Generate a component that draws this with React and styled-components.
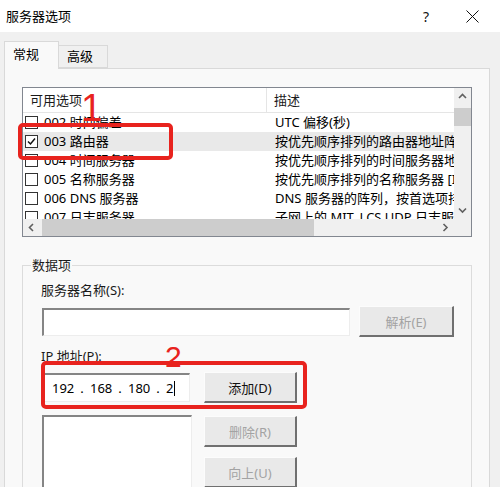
import styled, { createGlobalStyle } from 'styled-components';

const GlobalStyle = createGlobalStyle`
  html, body {
    margin: 0;
    padding: 0;
  }

  body {
    font-family: "Noto Sans", "Noto Sans CJK SC", sans-serif;
    font-size: 13px;
    color: #000;
  }
`;

const RED = '#e8231e';

const StyledWindow = styled.div`
  position: relative;
  width: 500px;
  height: 487px;
  overflow: hidden;
  display: flex;
  flex-direction: column;
  background-color: #f0f0f0;
`;

const StyledTitleBar = styled.header`
  flex: none;
  height: 32px;
  display: flex;
  align-items: center;
  padding: 0 5px 0 6px;
  background-color: #fff;
`;

const StyledTitle = styled.h1`
  flex: 1;
  margin: 0;
  font-size: 13px;
  font-weight: 400;
  line-height: 18px;
`;

const StyledTitleButton = styled.button`
  width: 46px;
  height: 32px;
  display: grid;
  place-items: center;
  padding: 0;
  border: none;
  background: none;
  font-family: inherit;
  font-size: 14px;
  color: #111;
`;

const StyledBody = styled.div`
  flex: 1;
  display: flex;
  flex-direction: column;
  padding: 9px 10px 0 4px;
  min-height: 0;
`;

const StyledTabStrip = styled.div`
  display: flex;
  align-items: flex-end;
  height: 27px;
`;

const StyledTab = styled.div`
  position: relative;
  z-index: ${({ $active }) => ($active ? 1 : 0)};
  box-sizing: border-box;
  width: ${({ $active }) => ($active ? '55px' : '49px')};
  height: ${({ $active }) => ($active ? '28px' : '23px')};
  margin-bottom: ${({ $active }) => ($active ? '-1px' : '0')};
  padding: ${({ $active }) => ($active ? '3px 0 0 8px' : '1px 0 0 8px')};
  border: 1px solid #d9d9d9;
  border-left-width: ${({ $active }) => ($active ? '1px' : '0')};
  border-bottom: ${({ $active }) => ($active ? 'none' : '1px solid #d9d9d9')};
  background-color: ${({ $active }) => ($active ? '#f9f9f9' : '#f0f0f0')};
  line-height: 18px;
`;

const StyledPanel = styled.section`
  flex: 1;
  min-height: 0;
  padding: 18px 17px 0;
  border: 1px solid #d9d9d9;
  border-bottom: none;
  background-color: #f9f9f9;
`;

const StyledListView = styled.div`
  height: 150px;
  box-sizing: border-box;
  display: grid;
  grid-template-columns: 1fr 17px;
  grid-template-rows: 1fr 17px;
  border: 1px solid #828790;
  background-color: #fff;
`;

const StyledListContent = styled.div`
  overflow: hidden;
  min-width: 0;
`;

const StyledHeaderRow = styled.div`
  display: flex;
  height: 25px;
  box-sizing: border-box;
  border-bottom: 1px solid #e5e5e5;
  line-height: 24px;
`;

const StyledHeaderCell = styled.div`
  box-sizing: border-box;
  flex: ${({ $first }) => ($first ? '0 0 244px' : '1')};
  padding-left: 7px;
  border-right: ${({ $first }) => ($first ? '1px solid #e5e5e5' : 'none')};
  color: #1a1a1a;
`;

const StyledRow = styled.div`
  display: flex;
  height: 19px;
  align-items: center;
  background-color: ${({ $selected }) => ($selected ? '#e9e9e9' : 'transparent')};
  white-space: nowrap;
  line-height: 19px;
`;

const StyledNameCell = styled.div`
  flex: 0 0 244px;
  box-sizing: border-box;
  display: flex;
  align-items: center;
  gap: 6px;
  padding-left: 2px;
  overflow: hidden;
`;

const StyledDescCell = styled.div`
  flex: 1;
  min-width: 0;
  padding-left: 8px;
  overflow: hidden;
`;

const StyledCheckbox = styled.span`
  flex: none;
  width: 13px;
  height: 13px;
  box-sizing: border-box;
  display: grid;
  place-items: center;
  border: 1px solid #333;
  background-color: #fff;
`;

const StyledVScroll = styled.div`
  display: flex;
  flex-direction: column;
  background-color: #f0f0f0;
`;

const StyledHScroll = styled.div`
  display: flex;
  background-color: #f0f0f0;
`;

const StyledArrow = styled.div`
  flex: none;
  width: 17px;
  height: 17px;
  display: grid;
  place-items: center;
`;

const StyledTrack = styled.div`
  flex: 1;
  display: flex;
  flex-direction: ${({ $vertical }) => ($vertical ? 'column' : 'row')};
`;

const StyledThumb = styled.div`
  background-color: #cdcdcd;
  ${({ $vertical }) => ($vertical
    ? 'height: 18px; margin-top: 3px;'
    : 'width: 272px; margin-left: 2px;')}
`;

const StyledCorner = styled.div`
  background-color: #f0f0f0;
`;

const StyledGroup = styled.fieldset`
  margin: 19px 0 0;
  padding: 7px 17px 0 18px;
  height: 260px;
  box-sizing: border-box;
  border: 1px solid #dcdcdc;
  border-bottom: none;
`;

const StyledLegend = styled.legend`
  margin-left: -10px;
  padding: 0 1px;
  line-height: 18px;
  color: #1a1a1a;
`;

const StyledLabel = styled.div`
  margin-top: ${({ $gap }) => $gap || 0}px;
  line-height: 18px;
  color: #1a1a1a;
`;

const StyledFieldRow = styled.div`
  display: flex;
  align-items: ${({ $top }) => ($top ? 'flex-start' : 'center')};
  gap: ${({ $gap }) => $gap}px;
  margin-top: ${({ $mt }) => $mt}px;
`;

const StyledInput = styled.div`
  width: ${({ $w }) => $w}px;
  height: ${({ $h }) => $h}px;
  box-sizing: border-box;
  margin-left: 1px;
  border-style: solid;
  border-width: 2px 1px 1px 2px;
  border-color: #858585 #ededed #ededed #858585;
  background-color: #fff;
`;

const StyledIpField = styled(StyledInput)`
  display: flex;
  align-items: center;
  padding-left: 8px;
  line-height: 18px;
`;

const StyledOctet = styled.span`
  width: 22px;
  white-space: nowrap;
`;

const StyledDot = styled.span`
  width: 16px;
  text-align: center;
`;

const StyledCaret = styled.span`
  display: inline-block;
  width: 1px;
  height: 15px;
  margin-left: 1px;
  vertical-align: -3px;
  background-color: #000;
`;

const StyledButton = styled.button`
  width: ${({ $w }) => $w}px;
  height: 31px;
  box-sizing: border-box;
  padding: 0;
  border-style: solid;
  border-width: 1px 2px 2px 1px;
  border-color: #fcfcfc #707070 #707070 #fcfcfc;
  background-color: #e9e9e9;
  font-family: inherit;
  font-size: 13px;
  color: ${({ disabled }) => (disabled ? '#a3a3a3' : '#111')};
`;

const StyledButtonColumn = styled.div`
  display: flex;
  flex-direction: column;
  gap: 10px;
  padding-top: 1px;
`;

const StyledMarkBox = styled.div`
  position: absolute;
  left: ${({ $x }) => $x}px;
  top: ${({ $y }) => $y}px;
  width: ${({ $w }) => $w}px;
  height: ${({ $h }) => $h}px;
  box-sizing: border-box;
  border: 4px solid ${RED};
  border-radius: 5px;
  pointer-events: none;
`;

const StyledMarkNumber = styled.span`
  position: absolute;
  left: ${({ $x }) => $x}px;
  top: ${({ $y }) => $y}px;
  font-family: "Liberation Sans", sans-serif;
  font-size: ${({ $size }) => $size}px;
  line-height: 1;
  color: ${RED};
`;

const OPTIONS = [
  { name: '002 时间偏差', desc: 'UTC 偏移(秒)' },
  { name: '003 路由器', desc: '按优先顺序排列的路由器地址阵列', checked: true },
  { name: '004 时间服务器', desc: '按优先顺序排列的时间服务器地址阵列' },
  { name: '005 名称服务器', desc: '按优先顺序排列的名称服务器 [IEN 116]' },
  { name: '006 DNS 服务器', desc: 'DNS 服务器的阵列，按首选项排列' },
  { name: '007 日志服务器', desc: '子网上的 MIT_LCS UDP 日志服务器阵列' },
];

function Chevron({ dir }) {
  const points = {
    up: '1,6 4.5,2.5 8,6',
    down: '1,2.5 4.5,6 8,2.5',
    left: '6,1 2.5,4.5 6,8',
    right: '2.5,1 6,4.5 2.5,8',
  }[dir];

  return (
    <svg width="9" height="9" viewBox="0 0 9 9">
      <polyline points={points} fill="none" stroke="#606060" strokeWidth="1.6" />
    </svg>
  );
}

function App() {
  return (
    <StyledWindow>
      <GlobalStyle />

      <StyledTitleBar>
        <StyledTitle>服务器选项</StyledTitle>
        <StyledTitleButton>?</StyledTitleButton>
        <StyledTitleButton aria-label="关闭">
          <svg width="13" height="13" viewBox="0 0 13 13">
            <path d="M0.5 0.5 L12.5 12.5 M12.5 0.5 L0.5 12.5" stroke="#111" strokeWidth="1" />
          </svg>
        </StyledTitleButton>
      </StyledTitleBar>

      <StyledBody>
        <StyledTabStrip>
          <StyledTab $active>常规</StyledTab>
          <StyledTab>高级</StyledTab>
        </StyledTabStrip>

        <StyledPanel>
          <StyledListView>
            <StyledListContent>
              <StyledHeaderRow>
                <StyledHeaderCell $first>可用选项</StyledHeaderCell>
                <StyledHeaderCell>描述</StyledHeaderCell>
              </StyledHeaderRow>
              {OPTIONS.map((option) => (
                <StyledRow key={option.name} $selected={option.checked}>
                  <StyledNameCell>
                    <StyledCheckbox>
                      {option.checked && (
                        <svg width="9" height="9" viewBox="0 0 9 9">
                          <polyline points="1,4.5 3.5,7 8,1.5" fill="none" stroke="#111" strokeWidth="1.5" />
                        </svg>
                      )}
                    </StyledCheckbox>
                    {option.name}
                  </StyledNameCell>
                  <StyledDescCell>{option.desc}</StyledDescCell>
                </StyledRow>
              ))}
            </StyledListContent>

            <StyledVScroll>
              <StyledArrow><Chevron dir="up" /></StyledArrow>
              <StyledTrack $vertical>
                <StyledThumb $vertical />
              </StyledTrack>
              <StyledArrow><Chevron dir="down" /></StyledArrow>
            </StyledVScroll>

            <StyledHScroll>
              <StyledArrow><Chevron dir="left" /></StyledArrow>
              <StyledTrack>
                <StyledThumb />
              </StyledTrack>
              <StyledArrow><Chevron dir="right" /></StyledArrow>
            </StyledHScroll>

            <StyledCorner />
          </StyledListView>

          <StyledGroup>
            <StyledLegend>数据项</StyledLegend>

            <StyledLabel>服务器名称(S):</StyledLabel>
            <StyledFieldRow $gap={9} $mt={7}>
              <StyledInput $w={308} $h={28} />
              <StyledButton $w={95} disabled>解析(E)</StyledButton>
            </StyledFieldRow>

            <StyledLabel $gap={10}>IP 地址(P):</StyledLabel>
            <StyledFieldRow $gap={14} $mt={7}>
              <StyledIpField $w={148} $h={29}>
                <StyledOctet>192</StyledOctet>
                <StyledDot>.</StyledDot>
                <StyledOctet>168</StyledOctet>
                <StyledDot>.</StyledDot>
                <StyledOctet>180</StyledOctet>
                <StyledDot>.</StyledDot>
                <StyledOctet>2<StyledCaret /></StyledOctet>
              </StyledIpField>
              <StyledButton $w={93}>添加(D)</StyledButton>
            </StyledFieldRow>

            <StyledFieldRow $gap={12} $mt={12} $top>
              <StyledInput $w={150} $h={80} />
              <StyledButtonColumn>
                <StyledButton $w={93} disabled>删除(R)</StyledButton>
                <StyledButton $w={93} disabled>向上(U)</StyledButton>
              </StyledButtonColumn>
            </StyledFieldRow>
          </StyledGroup>
        </StyledPanel>
      </StyledBody>

      <StyledMarkBox $x={18} $y={123} $w={155} $h={37} />
      <StyledMarkNumber $x={81} $y={89} $size={38}>1</StyledMarkNumber>
      <StyledMarkBox $x={41} $y={361} $w={266} $h={48} />
      <StyledMarkNumber $x={165} $y={342} $size={30}>2</StyledMarkNumber>
    </StyledWindow>
  );
}

export default App;
